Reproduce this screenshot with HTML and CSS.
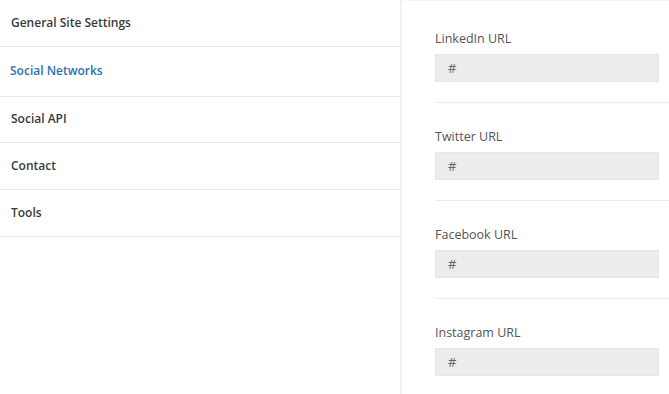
FILE: index.html
```html
<!DOCTYPE html>
<html lang="en">
<head>
  <meta charset="utf-8" />
  <title>Settings</title>
<link rel="stylesheet" href="styles.css">
</head>
<body>
<div class="settings">
  <!-- left menu -->
  <ul class="menu">
    <li class="menu-item">General Site Settings</li>
    <li class="menu-item active">Social Networks</li>
    <li class="menu-item short">Social API</li>
    <li class="menu-item">Contact</li>
    <li class="menu-item">Tools</li>
  </ul>

  <!-- social network form -->
  <div class="panel">
    <div class="field first">
      <label>LinkedIn URL</label>
      <input type="text" value="#"/>
    </div>
    <div class="field">
      <label>Twitter URL</label>
      <input type="text" value="#"/>
    </div>
    <div class="field">
      <label>Facebook URL</label>
      <input type="text" value="#"/>
    </div>
    <div class="field">
      <label>Instagram URL</label>
      <input type="text" value="#"/>
    </div>
  </div>
</div>
</body>
</html>
```

FILE: styles.css
```css
html, body{
  margin: 0;
  height: 100%;
  background: #fff;
  font-family: 'Open Sans', sans-serif;
  font-size: 13px;
  line-height: 18px;
  color: #333;
}
.settings{
  display: flex;
  gap: 1px;
  height: 100%;
}
.menu{
  width: 400px;
  margin: 0;
  padding: 0;
  list-style: none;
  border-right: 1px solid #ebebeb;
}
.menu-item{
  padding: 14px 11px;
  font-size: 12px;
  font-weight: 600;
  color: #3a3a3a;
  border-bottom: 1px solid #ebebeb;
}
.menu-item.active{
  padding: 15px 10px 16px;
  color: #2a74a8;
}
.menu-item.short{
  padding: 13px 11px 14px;
}
.panel{
  flex: 1;
  padding-left: 32px;
  border-left: 1px solid #f4f4f4;
  border-top: 1px solid #f6f6f6;
}
.field{
  padding: 24px 10px 20px 0;
  border-bottom: 1px solid #ececec;
}
.field.first{
  padding-top: 28px;
}
.field label{
  display: block;
  padding-top: 1px;
  margin-bottom: 6px;
  font-size: 12.5px;
  color: #555;
}
.field input{
  display: block;
  box-sizing: border-box;
  width: 100%;
  height: 28px;
  margin: 0;
  padding: 0 12px;
  border: 1px solid #e6e6e6;
  background: #ececec;
  font-family: 'Open Sans', sans-serif;
  font-size: 13px;
  color: #666;
  outline: none;
}
```
